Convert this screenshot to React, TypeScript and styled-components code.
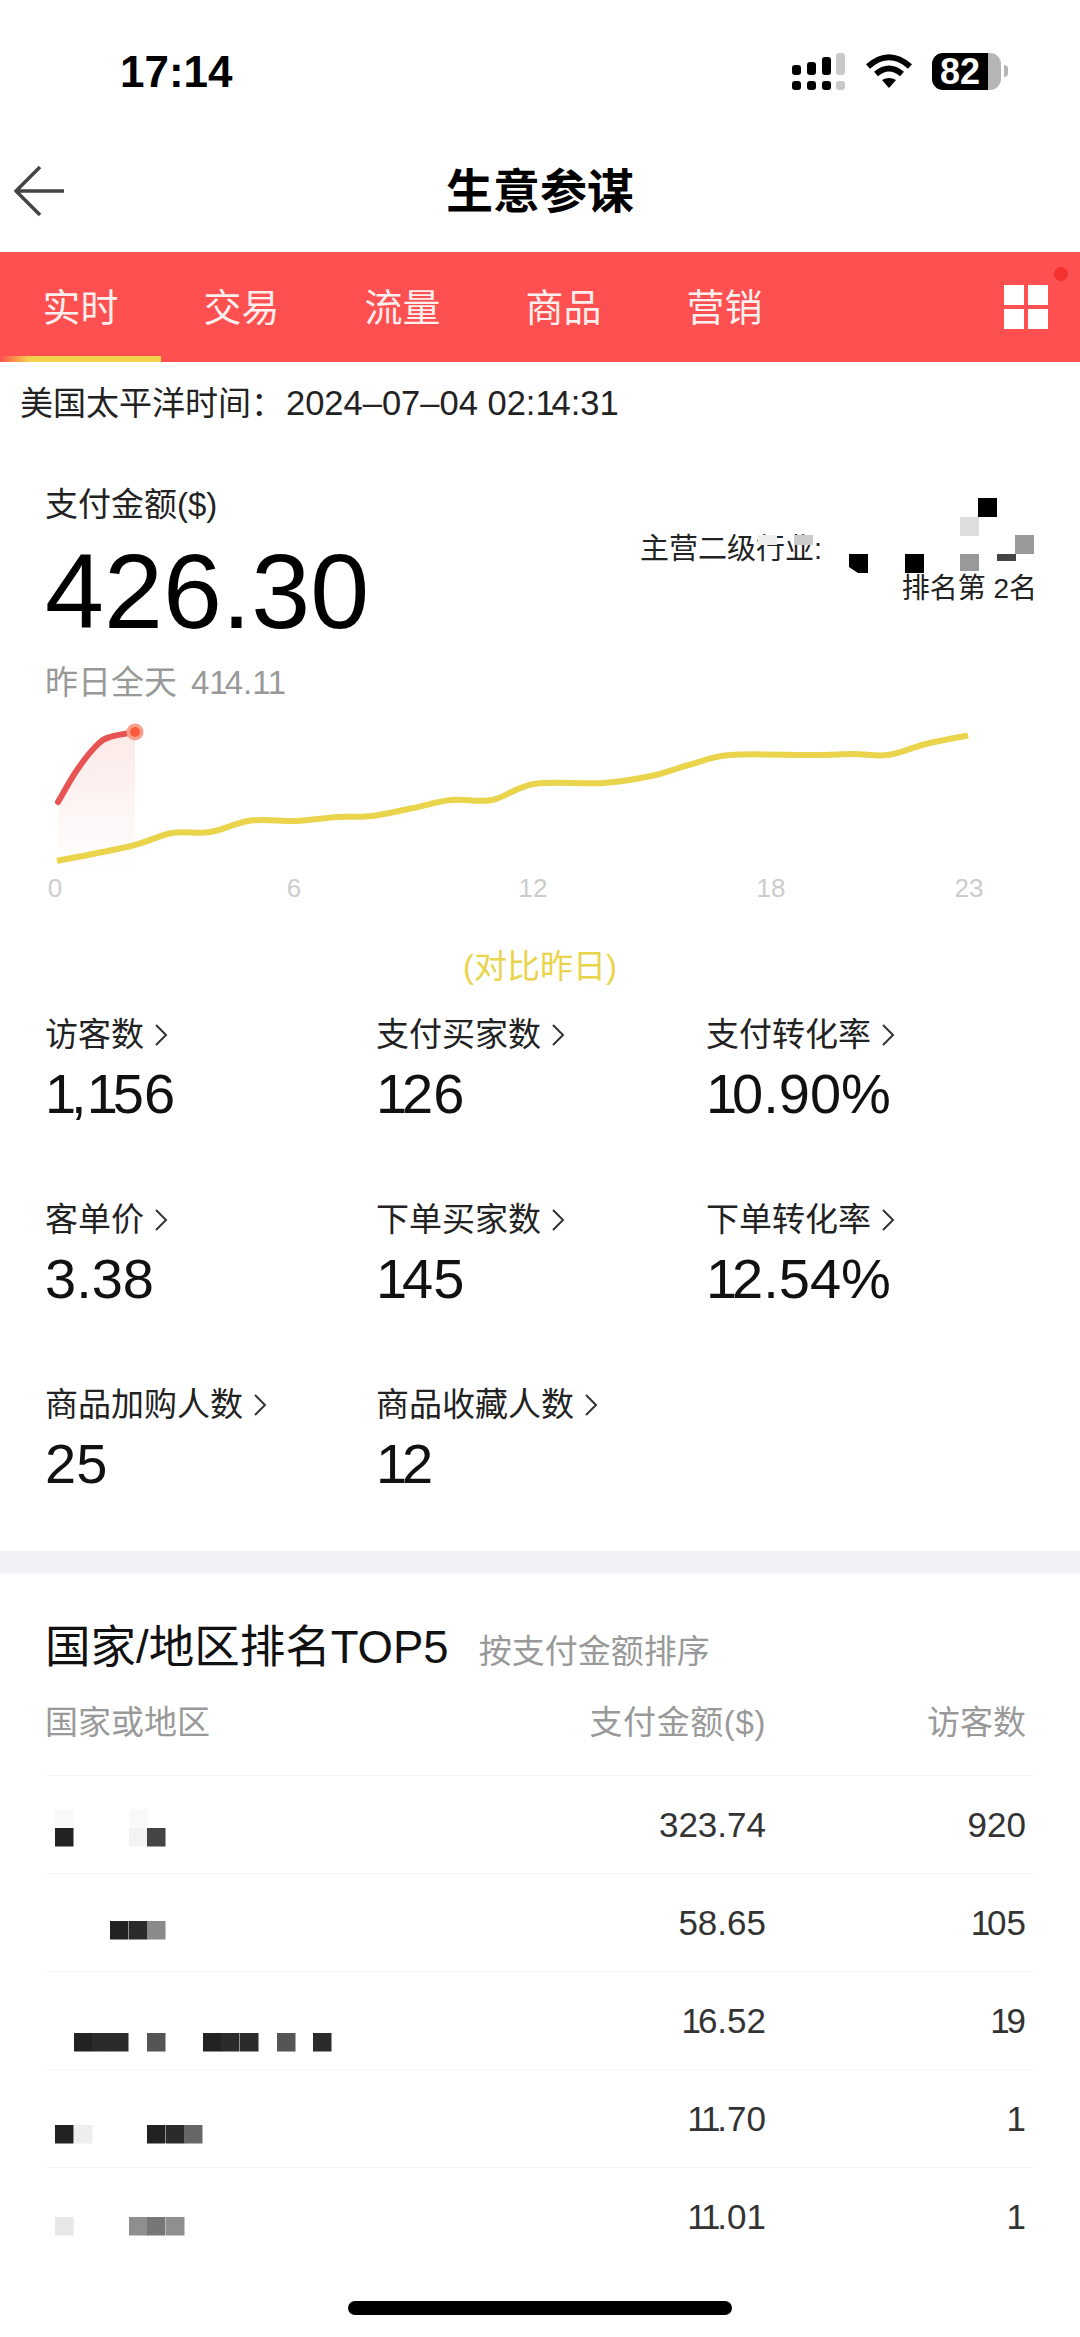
import React from 'react';
import styled, { createGlobalStyle } from 'styled-components';

const FONT = '"Liberation Sans", "Noto Sans CJK SC", sans-serif';

const GlobalStyle = createGlobalStyle`
  html, body { margin: 0; padding: 0; background: #fff; }
  body { font-family: ${FONT}; color: #222; }
`;

type Pt = [number, number];
type Cell = [number, number, string, number?];

const YESTERDAY: Pt[] = [
  [57, 861], [131, 846], [172, 833], [210, 832], [251, 820.5], [296, 821], [337, 817], [372, 816],
  [413, 808], [451, 800], [492, 800], [534, 784], [603, 783], [651, 776], [689, 765], [730, 755],
  [813, 755], [854, 754], [888, 755], [926, 744], [968, 735.5],
];
const TODAY: Pt[] = [[58, 802], [77, 770], [97, 745], [110, 737], [135, 732]];
const AXIS: [number, string][] = [[55, '0'], [294, '6'], [533, '12'], [771, '18'], [969, '23']];

// catmull-rom through the points
const smooth = (pts: Pt[]) => {
  let d = `M${pts[0][0]} ${pts[0][1]}`;
  for (let i = 0; i < pts.length - 1; i++) {
    const p0 = pts[Math.max(i - 1, 0)];
    const p1 = pts[i];
    const p2 = pts[i + 1];
    const p3 = pts[Math.min(i + 2, pts.length - 1)];
    const c1 = [p1[0] + (p2[0] - p0[0]) / 6, p1[1] + (p2[1] - p0[1]) / 6];
    const c2 = [p2[0] - (p3[0] - p1[0]) / 6, p2[1] - (p3[1] - p1[1]) / 6];
    d += ` C${c1[0]} ${c1[1]} ${c2[0]} ${c2[1]} ${p2[0]} ${p2[1]}`;
  }
  return d;
};

const METRICS = [
  { label: '访客数', value: '1,156' },
  { label: '支付买家数', value: '126' },
  { label: '支付转化率', value: '10.90%' },
  { label: '客单价', value: '3.38' },
  { label: '下单买家数', value: '145' },
  { label: '下单转化率', value: '12.54%' },
  { label: '商品加购人数', value: '25' },
  { label: '商品收藏人数', value: '12' },
];

// mosaic cells: x from the table's left edge, y from the row's top
const ROWS: { amount: string; visitors: string; mosaic: Cell[] }[] = [
  {
    amount: '323.74',
    visitors: '920',
    mosaic: [
      [10, 33, '#f9f9f9'], [84, 33, '#f9f9f9'], [10, 52, '#222'], [84, 52, '#f3f3f3'], [102, 52, '#444'],
    ],
  },
  {
    amount: '58.65',
    visitors: '105',
    mosaic: [[65, 47, '#222'], [84, 47, '#2b2b2b'], [102, 47, '#8a8a8a']],
  },
  {
    amount: '16.52',
    visitors: '19',
    mosaic: [
      [29, 61, '#222'], [47, 61, '#2b2b2b'], [65, 61, '#2b2b2b'], [102, 61, '#555'],
      [158, 61, '#222'], [176, 61, '#2b2b2b'], [195, 61, '#2b2b2b'], [232, 61, '#555'], [268, 61, '#2b2b2b'],
    ],
  },
  {
    amount: '11.70',
    visitors: '1',
    mosaic: [[10, 55, '#222'], [29, 55, '#eee'], [102, 55, '#222'], [121, 55, '#2b2b2b'], [139, 55, '#666']],
  },
  {
    amount: '11.01',
    visitors: '1',
    mosaic: [[10, 49, '#e8e8e8'], [84, 49, '#8f8f8f'], [102, 49, '#777'], [121, 49, '#8f8f8f']],
  },
];

// blocks over the industry text, x/y from the block's top left, last value is the height if not 19
const INDUSTRY_MOSAIC: Cell[] = [
  [338, -31, '#000'], [320, -12, '#ddd'],
  [118, 6, '#eee', 10], [154, 6, '#ccc', 10], [375, 6, '#999'],
  [265, 25, '#000'], [320, 25, '#999', 17], [357, 25, '#444', 7],
];

// the 1 in the screenshot's digits is narrower than the others, a last 1 keeps its width for the right edge
const Digits = ({ text }: { text: string }) => (
  <>
    {text.split(/(1(?!$))/).map((part, i) => (part === '1' && i % 2 === 1 ? <One key={i}>1</One> : part))}
  </>
);

export default function App() {
  return (
    <Page>
      <GlobalStyle />
      <StatusBar>
        <Clock>17:14</Clock>
        <StatusIcons>
          <svg width="53" height="37" viewBox="0 0 53 37">
            <rect x="0" y="12" width="9" height="10" rx="3" fill="#000" />
            <rect x="15" y="9" width="9" height="13" rx="3" fill="#000" />
            <rect x="30" y="4" width="9" height="18" rx="3" fill="#000" />
            <rect x="44" y="0" width="9" height="22" rx="3" fill="#c9c9c9" />
            <rect x="0" y="28" width="9" height="9" rx="3" fill="#000" />
            <rect x="15" y="28" width="9" height="9" rx="3" fill="#000" />
            <rect x="30" y="28" width="9" height="9" rx="3" fill="#000" />
            <rect x="44" y="28" width="9" height="9" rx="3" fill="#c9c9c9" />
          </svg>
          <WifiIcon width="46" height="34" viewBox="0 0 46 34">
            <path d="M2 12.5 Q23 -6 44 12.5" fill="none" stroke="#000" strokeWidth="6" />
            <path d="M10 20 Q23 9 36 20" fill="none" stroke="#000" strokeWidth="6" />
            <path d="M16 26 Q23 22 30 26 L23 34 Z" fill="#000" />
          </WifiIcon>
          <Battery>82</Battery>
          <BatteryTip />
        </StatusIcons>
      </StatusBar>

      <NavBar>
        <BackButton width="56" height="56" viewBox="0 0 56 56">
          <path d="M26 4 L2 28 L26 52 M2 28 H50" fill="none" stroke="#444" strokeWidth="3.5" strokeLinejoin="round" />
        </BackButton>
        <Title>生意参谋</Title>
      </NavBar>

      <TabBar>
        {['实时', '交易', '流量', '商品', '营销'].map((t, i) => (
          <Tab key={t} $active={i === 0}>{t}</Tab>
        ))}
        <GridButton>
          <GridSquare />
          <GridSquare />
          <GridSquare />
          <GridSquare />
        </GridButton>
      </TabBar>

      <TimeRow>
        美国太平洋时间：
        <Stamp><Digits text="2024–07–04 02:14:31" /></Stamp>
      </TimeRow>

      <Summary>
        <div>
          <SummaryLabel>支付金额($)</SummaryLabel>
          <SummaryValue>426.30</SummaryValue>
          <SummaryPrev>
            昨日全天
            <PrevAmount><Digits text="414.11" /></PrevAmount>
          </SummaryPrev>
        </div>
        <Industry>
          <IndustryLine>主营二级行业:</IndustryLine>
          <IndustryRank>排名第 2名</IndustryRank>
          <IndustryMosaic width="400" height="90" viewBox="0 -31 400 90">
            {INDUSTRY_MOSAIC.map(([x, y, c, h], i) => (
              <rect key={i} x={x} y={y} width="19" height={h ?? 19} fill={c} />
            ))}
            <path d="M209 25 H228 V44 H218 L209 38 Z" fill="#000" />
          </IndustryMosaic>
        </Industry>
      </Summary>

      <Chart width="1080" height="195" viewBox="0 715 1080 195">
        <defs>
          <linearGradient id="todayFill" x1="0" y1="0" x2="0" y2="1">
            <stop offset="0" stopColor="#fbe9e7" />
            <stop offset="1" stopColor="#fff" />
          </linearGradient>
        </defs>
        <path d={`${smooth(TODAY)} V870 H58 Z`} fill="url(#todayFill)" />
        <path d={smooth(YESTERDAY)} fill="none" stroke="#e9d44c" strokeWidth="6" />
        <path d={smooth(TODAY)} fill="none" stroke="#e85454" strokeWidth="6" strokeLinecap="round" />
        <circle cx="135" cy="732" r="8.5" fill="#f9a08c" />
        <circle cx="135" cy="732" r="5" fill="#fb5a3c" />
        {AXIS.map(([x, t]) => (
          <AxisText key={t} x={x} y="897" textAnchor="middle">{t}</AxisText>
        ))}
      </Chart>

      <Compare>(对比昨日)</Compare>

      <MetricGrid>
        {METRICS.map(m => (
          <div key={m.label}>
            <MetricLabel>
              {m.label}
              <svg width="14" height="22" viewBox="0 0 14 22">
                <path d="M2 1 L12 11 L2 21" fill="none" stroke="#333" strokeWidth="2" />
              </svg>
            </MetricLabel>
            <MetricValue><Digits text={m.value} /></MetricValue>
          </div>
        ))}
      </MetricGrid>

      <Divider />

      <RankSection>
        <RankHead>
          <RankTitle>国家/地区排名TOP5</RankTitle>
          <RankHint>按支付金额排序</RankHint>
        </RankHead>
        <TableHead>
          <NameCol>国家或地区</NameCol>
          <AmountHead>支付金额($)</AmountHead>
          <VisitorCol>访客数</VisitorCol>
        </TableHead>
        {ROWS.map(r => (
          <TableRow key={r.amount}>
            <NameCol>
              <svg width="330" height="97" viewBox="0 0 330 97">
                {r.mosaic.map(([x, y, c], i) => (
                  <rect key={i} x={x} y={y} width="18.5" height="18.5" fill={c} />
                ))}
              </svg>
            </NameCol>
            <AmountCol><Digits text={r.amount} /></AmountCol>
            <VisitorCol><Digits text={r.visitors} /></VisitorCol>
          </TableRow>
        ))}
      </RankSection>

      <HomeIndicator />
    </Page>
  );
}

const Page = styled.div`
  position: relative;
  width: 1080px;
  height: 2337px;
  overflow: hidden;
  background: #fff;
`;

const One = styled.span`
  letter-spacing: -0.09em;
`;

const StatusBar = styled.div`
  height: 110px;
  display: flex;
  justify-content: space-between;
  align-items: flex-start;
  padding: 0 72px 0 120px;
  box-sizing: border-box;
`;

const Clock = styled.div`
  margin-top: 46px;
  font-size: 44px;
  line-height: 52px;
  font-weight: 700;
  color: #000;
`;

const StatusIcons = styled.div`
  margin-top: 53px;
  display: flex;
  align-items: flex-start;
`;

const WifiIcon = styled.svg`
  margin: 1px 20px 0 21px;
`;

const Battery = styled.div`
  width: 69px;
  height: 37px;
  box-sizing: border-box;
  padding-right: 13px;
  border-radius: 11px;
  background: linear-gradient(90deg, #000 0 56px, #b5b5b5 56px);
  color: #fff;
  font-size: 36px;
  font-weight: 700;
  line-height: 37px;
  text-align: center;
`;

const BatteryTip = styled.div`
  width: 4px;
  height: 12px;
  margin: 12px 0 0 3px;
  border-radius: 0 4px 4px 0;
  background: #b5b5b5;
`;

const NavBar = styled.div`
  position: relative;
  height: 142px;
  display: flex;
  align-items: center;
  justify-content: center;
`;

const BackButton = styled.svg`
  position: absolute;
  left: 14px;
  top: 53px;
`;

const Title = styled.div`
  margin-top: 12px;
  font-size: 47px;
  font-weight: 700;
  color: #000;
`;

const TabBar = styled.div`
  position: relative;
  height: 110px;
  display: flex;
  background: #fe5050;
`;

const Tab = styled.div<{ $active?: boolean }>`
  position: relative;
  width: 161px;
  padding-top: 1px;
  box-sizing: border-box;
  line-height: 110px;
  text-align: center;
  font-size: 38px;
  color: rgba(255, 255, 255, 0.92);

  ${p =>
    p.$active &&
    `
    &::after {
      content: '';
      position: absolute;
      left: 0;
      right: 0;
      bottom: 0;
      height: 6px;
      background: linear-gradient(90deg, #fe5050, #f5d24c 18%);
    }
  `}
`;

const GridButton = styled.div`
  position: absolute;
  right: 32px;
  top: 33px;
  display: grid;
  grid-template-columns: 20px 20px;
  grid-template-rows: 20px 20px;
  gap: 4px;

  &::after {
    content: '';
    position: absolute;
    left: 50px;
    top: -18px;
    width: 14px;
    height: 14px;
    border-radius: 50%;
    background: #f3312f;
  }
`;

const GridSquare = styled.div`
  background: #fff;
`;

const TimeRow = styled.div`
  height: 82px;
  padding-left: 20px;
  font-size: 33px;
  line-height: 82px;
  color: #222;
`;

const Stamp = styled.span`
  margin-left: 2px;
  font-size: 34.5px;
`;

const Summary = styled.div`
  display: flex;
  justify-content: space-between;
  height: 271px;
  padding: 41px 45px 0;
  box-sizing: border-box;
`;

const SummaryLabel = styled.div`
  font-size: 33px;
  line-height: 40px;
  color: #222;
`;

const SummaryValue = styled.div`
  margin-top: 14px;
  font-size: 106px;
  line-height: 104px;
  color: #000;
`;

const SummaryPrev = styled.div`
  margin-top: 20px;
  font-size: 33px;
  line-height: 40px;
  color: #999;
`;

const PrevAmount = styled.span`
  margin-left: 14px;
`;

const Industry = styled.div`
  position: relative;
  width: 395px;
  margin-top: 44px;
`;

const IndustryLine = styled.div`
  font-size: 29px;
  line-height: 40px;
  color: #222;
`;

const IndustryRank = styled(IndustryLine)`
  margin-right: -2px;
  font-size: 28px;
  text-align: right;
`;

const IndustryMosaic = styled.svg`
  position: absolute;
  left: 0;
  top: -31px;
`;

const Chart = styled.svg`
  display: block;
`;

const AxisText = styled.text`
  font-size: 26px;
  font-family: ${FONT};
  fill: #ccc;
`;

const Compare = styled.div`
  margin-top: 37px;
  font-size: 33px;
  line-height: 40px;
  text-align: center;
  color: #e9d44c;
`;

const MetricGrid = styled.div`
  margin-top: 28px;
  padding-left: 45px;
  display: grid;
  grid-template-columns: 331px 330px 1fr;
  grid-auto-rows: 185px;
`;

const MetricLabel = styled.div`
  display: flex;
  align-items: center;
  gap: 10px;
  font-size: 33px;
  line-height: 40px;
  color: #222;
`;

const MetricValue = styled.div`
  margin-top: 8px;
  font-size: 56px;
  line-height: 62px;
  color: #111;
`;

const Divider = styled.div`
  margin-top: -19px;
  height: 22px;
  background: #f1f2f5;
`;

const RankSection = styled.div`
  padding: 49px 47px 0 45px;
`;

const RankHead = styled.div`
  display: flex;
  align-items: flex-end;
  height: 52px;
  gap: 30px;
`;

const RankTitle = styled.div`
  font-size: 45.5px;
  line-height: 52px;
  color: #111;
`;

const RankHint = styled.div`
  font-size: 33px;
  line-height: 44px;
  color: #999;
`;

const TableHead = styled.div`
  display: flex;
  height: 101px;
  padding: 26px 7px 0 0;
  box-sizing: border-box;
  font-size: 33px;
  line-height: 46px;
  color: #999;
`;

const TableRow = styled.div`
  display: flex;
  align-items: center;
  height: 98px;
  padding-right: 7px;
  box-sizing: border-box;
  border-top: 1px solid #f5f5f5;
  font-size: 35px;
  color: #333;
`;

const NameCol = styled.div`
  flex: 1;
  height: 100%;
`;

const AmountCol = styled.div`
  width: 300px;
  text-align: right;
`;

const AmountHead = styled(AmountCol)`
  letter-spacing: 0.6px;
`;

const VisitorCol = styled.div`
  width: 260px;
  text-align: right;
`;

const HomeIndicator = styled.div`
  position: absolute;
  left: 348px;
  top: 2301px;
  width: 384px;
  height: 14px;
  border-radius: 7px;
  background: #000;
`;
